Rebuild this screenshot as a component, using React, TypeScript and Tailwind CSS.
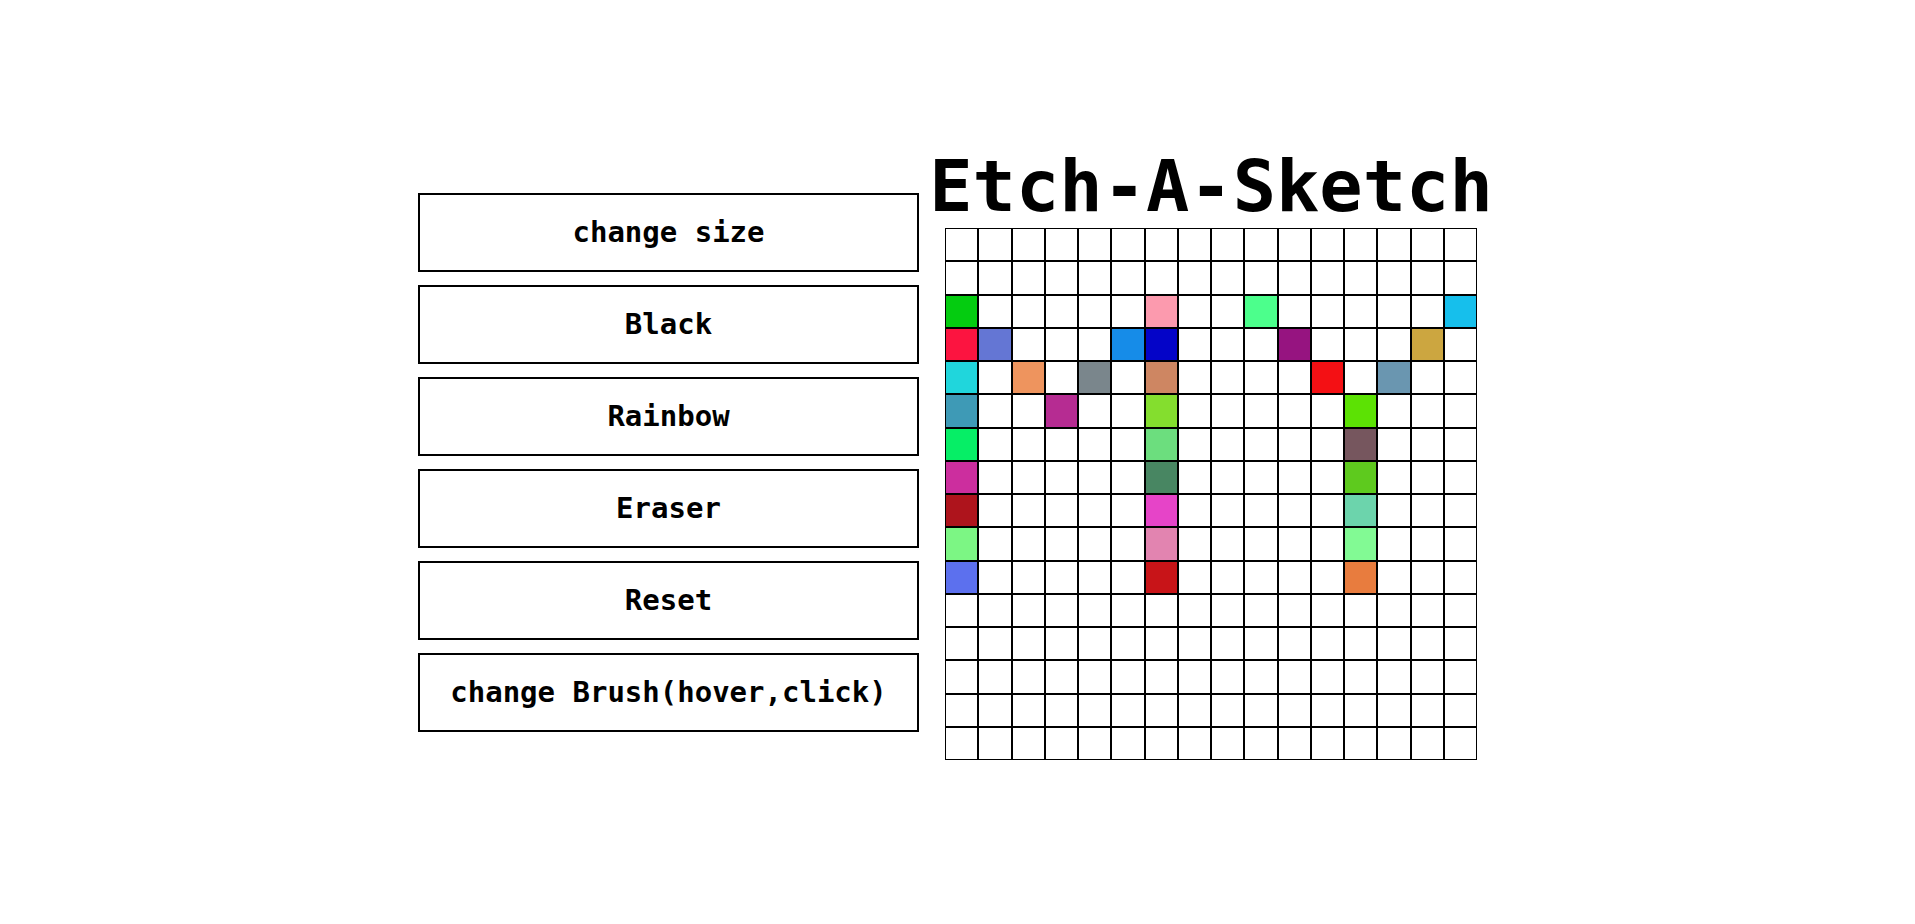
import { useState } from 'react';

type Mode = 'black' | 'rainbow' | 'eraser';
type Brush = 'hover' | 'click';

const drawing: Record<string, string> = {
  '2-0': '#04cc10', '2-6': '#fc9aae', '2-9': '#4cff8c', '2-15': '#16bfec',
  '3-0': '#fc1440', '3-1': '#6476d4', '3-5': '#168ce8', '3-6': '#0404c8', '3-10': '#961480', '3-14': '#cca640',
  '4-0': '#20d6dc', '4-2': '#ee945e', '4-4': '#7a868c', '4-6': '#ce8662', '4-11': '#f41014', '4-13': '#6a96b0',
  '5-0': '#3e9ab6', '5-3': '#b62c92', '5-6': '#84de2e', '5-12': '#5ce204',
  '6-0': '#06ee66', '6-6': '#6cde7e', '6-12': '#76565e',
  '7-0': '#cc2e9e', '7-6': '#488662', '7-12': '#5eca1e',
  '8-0': '#ae141c', '8-6': '#e644c8', '8-12': '#6cd4ac',
  '9-0': '#7cf684', '9-6': '#e284b0', '9-12': '#82fa94',
  '10-0': '#5c70ee', '10-6': '#c81418', '10-12': '#e87c3e',
};

const randomColor = () =>
  '#' + Math.floor(Math.random() * 0x1000000).toString(16).padStart(6, '0');

export default function App() {
  const [size, setSize] = useState(16);
  const [cells, setCells] = useState(drawing);
  const [mode, setMode] = useState<Mode>('rainbow');
  const [brush, setBrush] = useState<Brush>('hover');

  const paint = (key: string) =>
    setCells((prev) => ({
      ...prev,
      [key]: mode === 'black' ? '#000000' : mode === 'eraser' ? '#ffffff' : randomColor(),
    }));

  const changeSize = () => {
    const next = Number(window.prompt('Grid size (1-100)', String(size)));
    if (next >= 1 && next <= 100) {
      setSize(Math.floor(next));
      setCells({});
    }
  };

  const actions = [
    { label: 'change size', run: changeSize },
    { label: 'Black', run: () => setMode('black') },
    { label: 'Rainbow', run: () => setMode('rainbow') },
    { label: 'Eraser', run: () => setMode('eraser') },
    { label: 'Reset', run: () => setCells({}) },
    {
      label: 'change Brush(hover,click)',
      run: () => setBrush(brush === 'hover' ? 'click' : 'hover'),
    },
  ];

  return (
    <main className="flex min-h-screen flex-wrap content-center items-center justify-center gap-1.5 bg-white font-['DejaVu_Sans_Mono',monospace] font-bold text-black">
      <div className="flex w-[501px] max-w-full flex-col gap-[13px]">
        {actions.map(({ label, run }) => (
          <button
            key={label}
            type="button"
            onClick={run}
            className="cursor-pointer border-2 border-black bg-white py-5 text-[29px] leading-[35px]"
          >
            {label}
          </button>
        ))}
      </div>
      <section className="flex w-[572px] max-w-full flex-col items-center gap-5">
        <h1 className="whitespace-nowrap text-[72px] leading-[44px]">Etch-A-Sketch</h1>
        <div
          className="grid aspect-square w-[532px] max-w-full"
          style={{
            gridTemplateColumns: `repeat(${size}, 1fr)`,
            gridTemplateRows: `repeat(${size}, 1fr)`,
          }}
        >
          {Array.from({ length: size * size }, (_, i) => {
            const key = `${Math.floor(i / size)}-${i % size}`;
            return (
              <div
                key={key}
                className="border border-black"
                style={{ backgroundColor: cells[key] }}
                onMouseEnter={() => brush === 'hover' && paint(key)}
                onClick={() => brush === 'click' && paint(key)}
              />
            );
          })}
        </div>
      </section>
    </main>
  );
}
